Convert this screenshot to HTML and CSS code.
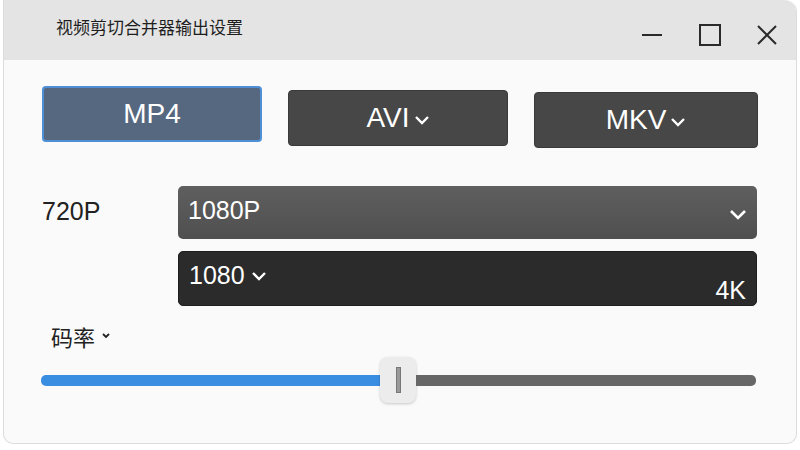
FILE: index.html
```html
<!DOCTYPE html>
<html lang="zh-CN">
<head>
  <meta charset="UTF-8">
  <meta name="viewport" content="width=device-width, initial-scale=1.0">
  <title>视频剪切合并器输出设置</title>
  <link rel="stylesheet" href="styles.css">
</head>
<body>
  <div class="window">
    <div class="titlebar">
      <span class="title">视频剪切合并器输出设置</span>
      <div class="controls">
        <svg class="ctl" width="22" height="22" viewBox="0 0 22 22"><line x1="1" y1="11" x2="21" y2="11" stroke="#2a2a2a" stroke-width="2"/></svg>
        <svg class="ctl" width="24" height="24" viewBox="0 0 24 24"><rect x="2" y="2" width="20" height="20" fill="none" stroke="#2a2a2a" stroke-width="2"/></svg>
        <svg class="ctl" width="24" height="24" viewBox="0 0 24 24"><path d="M3 3 L21 21 M21 3 L3 21" stroke="#2a2a2a" stroke-width="2"/></svg>
      </div>
    </div>

    <div class="content">
      <!-- format buttons -->
      <div class="formats">
        <button class="fmt active">MP4</button>
        <button class="fmt">AVI<svg class="chev" width="16" height="10" viewBox="0 0 16 10"><path d="M2 2 L8 8 L14 2" fill="none" stroke="#fff" stroke-width="2.4"/></svg></button>
        <button class="fmt">MKV<svg class="chev" width="16" height="10" viewBox="0 0 16 10"><path d="M2 2 L8 8 L14 2" fill="none" stroke="#fff" stroke-width="2.4"/></svg></button>
      </div>

      <!-- resolution -->
      <div class="res-row">
        <div class="res-label">720P</div>
        <div class="selects">
          <div class="select light">
            <span>1080P</span>
            <svg width="18" height="12" viewBox="0 0 18 12"><path d="M2 2 L9 9 L16 2" fill="none" stroke="#fff" stroke-width="2.6"/></svg>
          </div>
          <div class="select dark">
            <span class="sel-left">1080<svg width="16" height="10" viewBox="0 0 16 10"><path d="M2 2 L8 8 L14 2" fill="none" stroke="#fff" stroke-width="2.4"/></svg></span>
            <span class="sel-right">4K</span>
          </div>
        </div>
      </div>

      <!-- bitrate -->
      <div class="rate-label">码率<svg width="10" height="8" viewBox="0 0 10 8"><path d="M2 2 L5 5 L8 2" fill="none" stroke="#222" stroke-width="1.8"/></svg></div>
      <div class="slider">
        <div class="track-fill"></div>
        <div class="thumb"><span class="grip"></span></div>
        <div class="track-rest"></div>
      </div>
    </div>
  </div>
</body>
</html>
```

FILE: styles.css
```css
body {
  margin: 0;
  padding: 0;
  background-color: #ffffff;
  font-family: "Liberation Sans", Arial, "Noto Sans CJK SC", sans-serif;
  color: #222;
}

.window {
  width: 794px;
  height: 444px;
  margin-left: 3px;
  background-color: #fafafa;
  border: 1px solid #dcdcdc;
  border-top: none;
  border-radius: 0 12px 10px 10px;
  box-sizing: border-box;
  overflow: hidden;
}

.titlebar {
  height: 60px;
  background-color: #e4e4e4;
  display: flex;
  align-items: center;
  justify-content: space-between;
  padding: 0 17px 0 52px;
  border-top-right-radius: 12px;
}
.title {
  font-family: "Noto Sans CJK SC", sans-serif;
  font-size: 17px;
  color: #1e1e1e;
  margin-top: -8px;
}
.controls {
  display: flex;
  align-items: center;
  gap: 33px;
  margin-top: 10px;
}
.controls svg:first-child { margin-right: 2px; }

.content {
  padding: 26px 38px 0 38px;
}

.formats {
  display: flex;
  gap: 26px;
}
.fmt {
  width: 220px;
  height: 56px;
  background-color: #474747;
  border: 1px solid #3a3a3a;
  border-radius: 4px;
  color: #fff;
  font-family: "Liberation Sans", Arial, sans-serif;
  font-size: 28px;
  display: flex;
  align-items: center;
  justify-content: center;
  gap: 4px;
  padding: 0;
  cursor: pointer;
}
.fmt:nth-child(2) { margin-top: 4px; }
.fmt:nth-child(3) { margin-top: 6px; width: 224px; }
.fmt.active {
  background-color: #56687f;
  border: 2px solid #4f8fd6;
}
.chev { margin-top: 4px; }

.res-row {
  display: flex;
  margin-top: 38px;
}
.res-label {
  width: 136px;
  font-size: 25px;
  padding-top: 11px;
}
.selects {
  flex: 1;
  display: flex;
  flex-direction: column;
  gap: 12px;
  margin-right: 1px;
}
.select {
  height: 54px;
  border-radius: 5px;
  display: flex;
  justify-content: space-between;
  padding: 0 10px 0 10px;
  color: #fff;
  font-size: 25px;
  box-sizing: border-box;
}
.select.light {
  height: 53px;
  background: linear-gradient(to bottom, #5f5f5f, #4f4f4f);
  align-items: flex-start;
  padding-top: 10px;
}
.select.light svg { margin-top: 13px; }
.select.dark {
  height: 55px;
  background-color: #2b2b2b;
  border: 1px solid #1e1e1e;
  align-items: flex-start;
  padding-top: 9px;
}
.sel-right { margin-top: 15px; }
.sel-left {
  display: flex;
  align-items: center;
  gap: 6px;
}

.rate-label {
  font-family: "Noto Sans CJK SC", sans-serif;
  font-size: 22px;
  margin-top: 14px;
  padding-left: 9px;
  display: flex;
  align-items: center;
  gap: 6px;
}

.slider {
  display: flex;
  align-items: center;
  margin-top: 4px;
  margin-left: -1px;
  height: 48px;
}
.track-fill {
  width: 339px;
  height: 11px;
  background-color: #3a8ee2;
  border-radius: 5px 0 0 5px;
}
.thumb {
  width: 36px;
  height: 46px;
  background-color: #ececec;
  border-radius: 8px;
  box-shadow: 0 1px 3px rgba(0, 0, 0, 0.2);
  display: flex;
  align-items: center;
  justify-content: center;
}
.grip {
  width: 5px;
  height: 26px;
  background-color: #999;
  border: 1px solid #777;
  box-sizing: border-box;
}
.track-rest {
  width: 340px;
  height: 11px;
  background-color: #676767;
  border-radius: 0 5px 5px 0;
}
```
